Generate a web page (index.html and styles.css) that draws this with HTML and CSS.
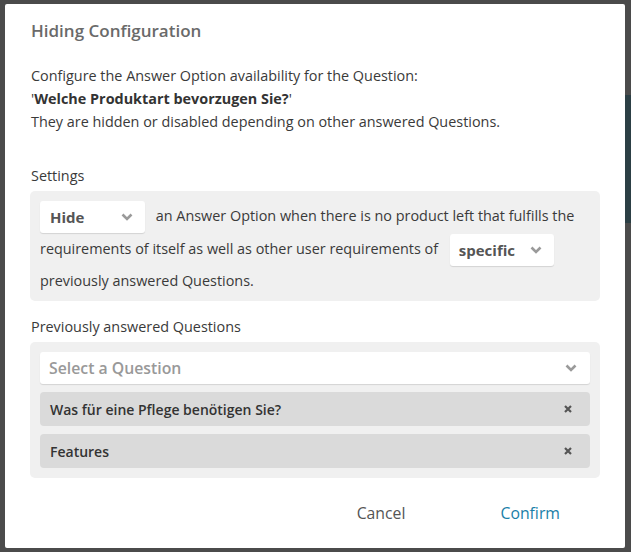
FILE: index.html
```html
<!DOCTYPE html>
<html>
<head>
<meta charset="utf-8">
<link rel="stylesheet" href="styles.css">
</head>
<body>
<div class="backdrop">
  <div class="bg-band"></div>
</div>
<div class="dialog">
  <h1 class="title">Hiding Configuration</h1>
  <div class="intro">
    <p>Configure the Answer Option availability for the Question:</p>
    <p>'<b>Welche Produktart bevorzugen Sie?</b>'</p>
    <p>They are hidden or disabled depending on other answered Questions.</p>
  </div>

  <div class="label">Settings</div>
  <div class="panel settings">
    <span class="select sel-hide"><span>Hide</span><svg class="chev" viewBox="0 0 12 8"><polyline points="1.5,1.5 6,6 10.5,1.5"/></svg></span> <span>an Answer Option when there is no product left that fulfills the</span> <span>requirements of itself as well as other user requirements of</span> <span class="select sel-spec"><span>specific</span><svg class="chev" viewBox="0 0 12 8"><polyline points="1.5,1.5 6,6 10.5,1.5"/></svg></span> <span>previously answered Questions.</span>
  </div>

  <div class="label">Previously answered Questions</div>
  <div class="panel questions">
    <div class="qselect"><span>Select a Question</span><svg class="chev" viewBox="0 0 12 8"><polyline points="1.5,1.5 6,6 10.5,1.5"/></svg></div>
    <div class="chip"><span>Was für eine Pflege benötigen Sie?</span><svg class="x" viewBox="0 0 10 10"><path d="M2 2L8 8M8 2L2 8"/></svg></div>
    <div class="chip"><span>Features</span><svg class="x" viewBox="0 0 10 10"><path d="M2 2L8 8M8 2L2 8"/></svg></div>
  </div>

  <div class="actions">
    <button class="btn cancel">Cancel</button>
    <button class="btn confirm">Confirm</button>
  </div>
</div>
</body>
</html>
```

FILE: styles.css
```css
* { box-sizing: border-box; }
html, body { margin: 0; padding: 0; }
body {
  width: 631px;
  height: 552px;
  background: #4b4b4b;
  font-family: "Open Sans", "Noto Sans", sans-serif;
  overflow: hidden;
  position: relative;
}
.backdrop {
  position: absolute;
  inset: 0;
}
.bg-band {
  position: absolute;
  right: 0;
  top: 95px;
  width: 20px;
  height: 128px;
  background: #2c3f45;
}
.dialog {
  position: relative;
  margin: 4px 0 0 5px;
  width: 620px;
  height: 544px;
  background: #fff;
  border-radius: 2px;
  padding: 15px 25px 0 25px;
  display: flex;
  flex-direction: column;
}
.title {
  margin: 0 0 0 1px;
  font-size: 17px;
  font-weight: 600;
  color: #6a6a6a;
  line-height: 24px;
}
.intro {
  margin-top: 21px;
  padding-left: 1px;
  font-size: 14.4px;
  color: #3a3a3a;
  line-height: 23px;
}
.intro p { margin: 0; }
.intro b { font-weight: 700; color: #333; }
.label {
  font-size: 14.4px;
  color: #3a3a3a;
  line-height: 20px;
  padding-left: 1px;
}
.intro + .label { margin-top: 33px; }
.panel {
  background: #f0f0f0;
  border-radius: 5px;
  margin-top: 5px;
}
.settings {
  padding: 10px 10px 7px 10px;
  font-size: 14.4px;
  color: #3a3a3a;
  line-height: 27px;
}
.select {
  display: inline-flex;
  align-items: center;
  justify-content: space-between;
  vertical-align: middle;
  height: 32px;
  background: #fff;
  border-radius: 3px;
  box-shadow: 0 1px 1px rgba(0,0,0,0.12);
  padding: 0 12px 0 10px;
  font-size: 15px;
  font-weight: 700;
  color: #555;
  margin: 0 7px 1px 0;
}
.sel-hide { width: 105px; }
.sel-spec { width: 104px; margin-left: 8px; margin-right: 7px; padding-left: 9px; }
.chev {
  width: 12px;
  height: 8px;
  fill: none;
  stroke: #9a9a9a;
  stroke-width: 2.6;
}
.settings + .label { margin-top: 16px; }
.questions {
  padding: 10px;
  display: flex;
  flex-direction: column;
  gap: 8px;
}
.qselect {
  height: 32px;
  background: #fff;
  border-radius: 3px;
  box-shadow: 0 1px 1px rgba(0,0,0,0.12);
  display: flex;
  align-items: center;
  justify-content: space-between;
  padding: 0 13px 0 9px;
  font-size: 15.8px;
  font-weight: 600;
  color: #999;
}
.chip {
  height: 34px;
  background: #dadada;
  border-radius: 4px;
  display: flex;
  align-items: center;
  justify-content: space-between;
  padding: 0 17px 0 10px;
  font-size: 14px;
  font-weight: 600;
  color: #333;
}
.x {
  width: 10px;
  height: 10px;
  fill: none;
  stroke: #555;
  stroke-width: 2.2;
}
.actions {
  display: flex;
  justify-content: flex-end;
  margin-top: 18px;
  padding-right: 40px;
}
.btn {
  background: none;
  border: none;
  font-family: inherit;
  font-size: 15.8px;
  padding: 6px 0;
  cursor: pointer;
}
.cancel { color: #555; margin-right: 95px; }
.confirm { color: #1a80a8; }
```
